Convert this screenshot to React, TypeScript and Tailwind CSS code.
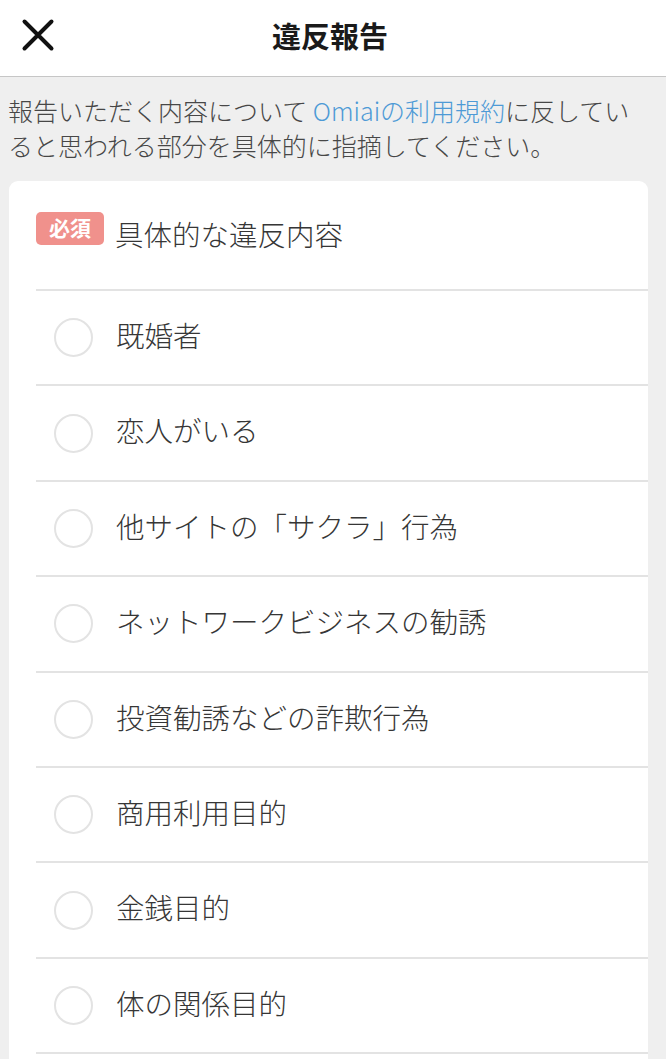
import React from "react";

const items = [
  "既婚者",
  "恋人がいる",
  "他サイトの「サクラ」行為",
  "ネットワークビジネスの勧誘",
  "投資勧誘などの詐欺行為",
  "商用利用目的",
  "金銭目的",
  "体の関係目的",
];

export default function App() {
  return (
    <div
      className="w-[666px] h-[1059px] overflow-hidden bg-[#efefef]"
      style={{ fontFamily: '"Noto Sans CJK JP", "Noto Sans", sans-serif' }}
    >
      <header className="relative h-[77px] bg-white border-b border-[#c6c6c6] flex items-center justify-center">
        <button className="absolute left-[21px] top-[18px] w-[34px] h-[34px] flex items-center justify-center">
          <svg width="34" height="34" viewBox="0 0 34 34">
            <path d="M3.5 3.5 L30.5 30.5 M30.5 3.5 L3.5 30.5" stroke="#111" strokeWidth="4" strokeLinecap="round" />
          </svg>
        </button>
        <h1 className="text-[29px] font-bold text-[#1a1a1a] leading-none mt-[-5px] mr-[6px]">違反報告</h1>
      </header>

      <p className="pl-[8px] pt-[16px] text-[25px] leading-[35px] text-[#474747] whitespace-nowrap font-light">
        報告いただく内容について <span className="text-[#4d9ad6]">Omiaiの利用規約</span>に反してい
        <br />
        ると思われる部分を具体的に指摘してください。
      </p>

      <div className="mt-[18px] ml-[9px] w-[639px] bg-white rounded-t-[9px] pl-[27px]">
        <div className="flex items-start pt-[31px] pb-[31px]">
          <span className="w-[68px] h-[33px] rounded-[5px] bg-[#f0918c] text-white text-[21px] font-bold flex items-center justify-center leading-none">
            <span className="mt-[-2px]">必須</span>
          </span>
          <span className="ml-[11px] text-[28.5px] leading-[44px] mb-[2px] text-[#363636] font-light">具体的な違反内容</span>
        </div>
        {items.map((t) => (
          <div
            key={t}
            className="h-[95.4px] border-t-2 border-[#e3e3e3] flex items-center pl-[18px]"
          >
            <span className="w-[39px] h-[39px] rounded-full border-2 border-[#e3e3e3] shrink-0" />
            <span className="ml-[23px] mt-[-5px] text-[28.5px] text-[#363636] leading-none font-light">{t}</span>
          </div>
        ))}
        <div className="h-[40px] border-t-2 border-[#e3e3e3]" />
      </div>
    </div>
  );
}
